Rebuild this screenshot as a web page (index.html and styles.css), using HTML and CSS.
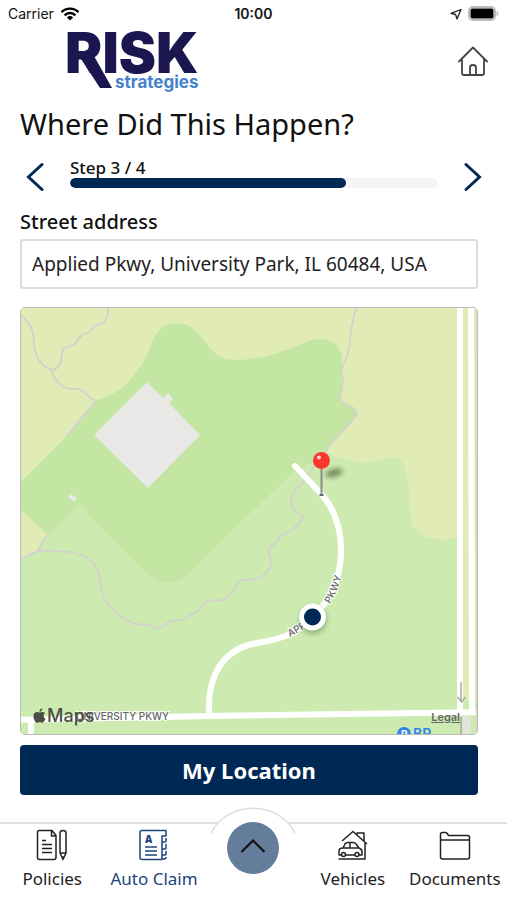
FILE: index.html
```html
<!DOCTYPE html>
<html lang="en">
<head>
    <meta charset="UTF-8">
    <meta name="viewport" content="width=device-width, initial-scale=1">
    <title>Auto Claim - Where Did This Happen?</title>
    <link rel="stylesheet" href="styles.css">
</head>
<body>
<div class="status-bar">
    <div class="status-left">
        <span>Carrier</span>
        <svg width="20" height="14" viewBox="0 0 20 14" fill="none" stroke="#000" stroke-width="2.4">
            <path d="M1.5 5.2a12 12 0 0 1 17 0M4.6 8.3a7.6 7.6 0 0 1 10.8 0"/>
            <path d="M10 13.4 6.9 10.4a4.4 4.4 0 0 1 6.2 0z" fill="#000" stroke="none"/>
        </svg>
    </div>
    <span class="status-time">10:00</span>
    <div class="status-right">
        <svg width="12" height="12" viewBox="0 0 12 12" fill="none" stroke="#222" stroke-width="1.3" stroke-linejoin="round">
            <path d="M11 1.5 1 5.3 5.6 6.5 7 11z"/>
        </svg>
        <svg width="31" height="15" viewBox="0 0 31 15">
            <rect x="1" y="1" width="26" height="13" rx="4" fill="#fff" stroke="#bbb" stroke-width="2"/>
            <rect x="2.5" y="2.5" width="23" height="10" rx="2" fill="#000"/>
            <path d="M28.5 5v5c2.5-1 2.5-4 0-5z" fill="#bbb"/>
        </svg>
    </div>
</div>

<header class="header">
    <svg class="logo" width="136" height="64" viewBox="0 0 136 64" role="img" aria-label="Risk Strategies">
        <path d="M14 26h15l18 32H35z" fill="#1b1650"/>
        <text class="logo-risk" x="0" y="43">RISK</text>
        <text class="logo-strategies" x="50" y="58">strategies</text>
    </svg>
    <a class="home-link" href="#" aria-label="Home">
        <svg width="30" height="31" viewBox="0 0 30 31" fill="none" stroke="#444" stroke-width="1.8" stroke-linejoin="round" stroke-linecap="round">
            <path d="M1 15.5 15 1.5l14 14M4 13.5V27q0 2 2 2h18q2 0 2-2V13.5"/>
            <path d="M12 29V21.5q0-2.5 3-2.5t3 2.5V29"/>
        </svg>
    </a>
</header>

<main class="content">
    <h1>Where Did This Happen?</h1>

    <div class="stepper">
        <button type="button" class="step-btn" aria-label="Previous step">
            <svg width="18" height="30" viewBox="0 0 18 30"><path d="M16 2.5 2.5 15 16 27.5"/></svg>
        </button>
        <div class="step-info">
            <label for="progress">Step 3 / 4</label>
            <progress id="progress" value="3" max="4"></progress>
        </div>
        <button type="button" class="step-btn" aria-label="Next step">
            <svg width="18" height="30" viewBox="0 0 18 30"><path d="M2 2.5 15.5 15 2 27.5"/></svg>
        </button>
    </div>

    <label class="address-label" for="address">Street address</label>
    <input type="text" id="address" name="address" value="Applied Pkwy, University Park, IL 60484, USA">

    <div class="map">
        <svg class="map-canvas" viewBox="21 308 456 426" preserveAspectRatio="xMidYMid slice">
            <defs>
                <filter id="soft" x="-50%" y="-50%" width="200%" height="200%"><feGaussianBlur stdDeviation="2.5"/></filter>
                <path id="road-north" d="M330 604Q338 592 344 568"/>
                <path id="road-south" d="M290 637Q300 632 316 621"/>
            </defs>
            <rect x="0" y="290" width="520" height="470" fill="#cdebb0"/>
            <!-- fields -->
            <path fill="#e0ebb6" d="M0 290H520V700H458V538C435 542 415 538 411 520C409 500 409 480 404 465C398 455 386 458 375 461C358 464 345 459 328 454L200 500H0z"/>
            <path fill="#e0ebb6" d="M0 500H22L48 535 37 551 21 559H0z"/>
            <!-- park -->
            <path fill="#c3e6a3" d="M0 503 22 481 66 437 96 400C122 395 143 370 152 342C160 324 171 322 180 324C192 322 203 340 212 350C221 361 234 361 250 359C275 357 296 345 312 340C332 336 340 345 342 358L341 370 343 380 340 400 355 408 357 414 328 448C318 462 302 468 290 475L195 567C178 588 160 586 143 570L79 504 48 535 21 510z"/>
            <path fill="#cdebb0" d="M327 451C335 458 342 460 350 461L345 520 255 520 240 522z"/>
            <!-- buildings -->
            <path fill="#e8e8e7" d="M147 382 163 398 168 393 173 399 169 403 200 435 148 488 94 435z"/>
            <path fill="#e8e8e7" d="M71 494 77 499 74 502 68 497z"/>
            <!-- trails -->
            <g class="trail">
                <path d="M18 313C31 323 34 329 34 345C36 361 44 367 51 370C55 381 62 388 71 389C84 387 85 396 96 401L66 437"/>
                <path d="M108 305C109 322 103 324 97 325C91 328 92 333 84 334C76 338 78 347 66 347C59 349 64 363 58 367Q55 370 51 370"/>
                <path d="M357 305C353 319 351 326 350 338C350 352 345 361 341 370C345 382 341 389 340 399C343 407 353 406 357 413C357 418 346 426 341 433Q331 442 326 451L313 467C305 486 291 488 291 501C292 512 299 513 303 517C299 526 289 533 283 534C277 540 277 544 269 548C267 556 276 563 269 569C262 579 255 580 242 580C234 584 235 595 223 600C210 600 207 601 203 605C198 613 194 613 190 615C185 621 178 620 171 621C163 625 163 629 155 628C147 623 142 625 135 624C123 620 107 607 103 596C99 580 100 570 94 564C84 552 65 550 38 551L18 560"/>
                <path d="M38 551 42 542 47 535"/>
            </g>
            <!-- roads -->
            <g class="road">
                <path d="M10 720 209 716 490 712"/>
                <path d="M31 720V750"/>
                <path d="M460 290V712M471 290 472 712"/>
                <path stroke-linecap="round" d="M295 466 323 496C336 512 342 530 341 555C339 587 325 606 312 617C292 639 271 640 252 644C224 651 207 674 209 714"/>
            </g>
            <path d="M476.5 290V750" stroke="#d9d9bd" stroke-width="1.5"/>
            <path d="M463 716h8v30h-8z" fill="#e4e4dc"/>
            <path d="M461 682v19M457.5 697l4 5 4-5M461 717v20" fill="none" stroke="#aaa" stroke-width="1.5"/>
            <!-- road names -->
            <text class="road-name" x="76" y="720">UNIVERSITY PKWY</text>
            <text class="road-name"><textPath href="#road-north">PKWY</textPath></text>
            <text class="road-name"><textPath href="#road-south">APPL</textPath></text>
            <circle cx="404" cy="734" r="7" fill="#2f83ed"/>
            <text x="401" y="738" class="poi-icon">P</text>
            <text x="413" y="739" class="poi">BP</text>
            <!-- current location -->
            <circle cx="313" cy="620" r="14" fill="#577345" opacity=".45" filter="url(#soft)"/>
            <circle cx="312.5" cy="617" r="13.5" fill="#fff"/>
            <circle cx="312.5" cy="617" r="8.5" fill="#002855"/>
            <!-- pin -->
            <ellipse cx="334" cy="473" rx="9" ry="4" fill="#475538" opacity=".65" filter="url(#soft)" transform="rotate(-15 334 473)"/>
            <path d="M321.5 467v27" stroke="#8b8b8b" stroke-width="2"/>
            <path d="M319.5 495h4" stroke="#667" stroke-width="2"/>
            <circle cx="321.5" cy="460.5" r="8.5" fill="#fb382d"/>
            <circle cx="319" cy="457.5" r="2" fill="#ffd4d0"/>
        </svg>
        <div class="map-credit">
            <svg width="13" height="16" viewBox="0 0 13 16" fill="#4a4f45">
                <path d="M6.5 4.6C5.5 4.3 4.8 3.9 3.7 4C1.5 4.2.4 6.2.5 8.5c.1 3 2 6.3 3.7 6.3 1 0 1.3-.6 2.5-.6s1.5.6 2.5.6c1.5 0 2.8-2.5 3.3-4C10.4 9.7 10 6.3 12 5.2 10.8 3.7 8.8 3.8 6.5 4.6zM6.5 3.9C6.3 2 7.7.5 9.3.2 9.5 2 8.1 3.8 6.5 3.9z"/>
            </svg>
            <span>Maps</span>
        </div>
        <a class="map-legal" href="#">Legal</a>
    </div>

    <button type="button" class="location-btn">My Location</button>
</main>

<nav class="tab-bar">
    <a class="tab" href="#">
        <svg width="32" height="32" viewBox="0 0 32 32">
            <path d="M16 1.5H3.5q-2 0-2 2v25q0 2 2 2H18q2 0 2-2V6.5zM15.5 1.5V7H20M6 11.5h4M6 15.5h10M6 19.5h10M6 23.5h10"/>
            <path d="M24 24V4q0-2.5 3-2.5T30 4V24l-3 6.5zM24 24h6M26.5 28h1"/>
        </svg>
        Policies
    </a>
    <a class="tab active" href="#">
        <svg width="32" height="32" viewBox="0 0 32 32">
            <path d="M28 7V1.5H4q-2 0-2 2v25q0 2 2 2h20V7zM28 7h-4M28 9v3q0 1-1 1h-3M28 15v4q0 1-1 1h-3M28 22v3q0 1-1 1h-3M28 28q0 2-2 2h-2M7 18h12M7 22h12M7 26h12"/>
            <text class="tab-letter" x="7" y="14">A</text>
        </svg>
        Auto Claim
    </a>
    <div class="tab-center">
        <svg class="center-arc" width="96" height="34" viewBox="0 0 96 34">
            <path d="M6 26C23-7 73-7 90 26V34H6z" fill="#fff"/>
            <path d="M6 26C23-7 73-7 90 26" fill="none" stroke="#ddd" stroke-width="1.5"/>
        </svg>
        <button type="button" class="center-btn" aria-label="Open menu">
            <svg width="26" height="16" viewBox="0 0 26 16"><path d="M1.5 14 13 2.5 24.5 14" fill="none" stroke="#111" stroke-width="2.2"/></svg>
        </button>
    </div>
    <a class="tab" href="#">
        <svg width="32" height="32" viewBox="0 0 32 32">
            <path d="M5 12 16 2.5 30 15M20 5.5V4h7v8M28 14v16H1.5"/>
            <path d="M4.5 26H2V22q0-3 4-3h16q3 1 3 4v3h-3M9 26h9M6 19l2-4q1-1.5 3-1.5h5q2 0 3 1.5l3 4M13 13.5V19"/>
            <circle cx="6.5" cy="25.5" r="2"/><circle cx="20" cy="25.5" r="2"/>
        </svg>
        Vehicles
    </a>
    <a class="tab" href="#">
        <svg width="32" height="32" viewBox="0 0 32 32">
            <path d="M1.5 28V5.5q0-2 2-2h3q1.5 0 2 1.500l1 1.500H28.500q2 0 2 2V28q0 2-2 2h-25q-2 0-2-2zM1.500 11h29"/>
        </svg>
        Documents
    </a>
</nav>
</body>
</html>
```

FILE: styles.css
```css
* {
    box-sizing: border-box;
}

body {
    display: flex;
    flex-direction: column;
    min-height: 100vh;
    margin: 0;
    background-color: #fff;
    color: #111;
    font-family: "Noto Sans", "Open Sans", sans-serif;
}

svg {
    display: block;
}

button {
    font-family: inherit;
    cursor: pointer;
}

/* Status bar */
.status-bar {
    display: grid;
    grid-template-columns: 1fr auto 1fr;
    align-items: center;
    height: 27px;
    padding: 0 8px;
    font-family: Inter, Roboto, sans-serif;
    font-size: 14px;
}

.status-left,
.status-right {
    display: flex;
    align-items: center;
    gap: 6px;
}

.status-right {
    justify-content: flex-end;
}

.status-time {
    font-weight: 600;
}

/* Header */
.header {
    display: flex;
    justify-content: space-between;
    align-items: center;
    height: 73px;
    padding: 0 19px 4px 65px;
}

.logo {
    overflow: visible;
}

.logo-risk {
    font: 900 56px Inter, sans-serif;
    fill: #1b1650;
}

.logo-strategies {
    font: 700 17px Inter, sans-serif;
    fill: #4682cb;
}

/* Form */
.content {
    flex: 1;
    display: flex;
    flex-direction: column;
    padding: 4px 29px 27px 20px;
}

h1 {
    margin: 0;
    font-size: 29px;
    font-weight: 400;
    line-height: 40px;
}

.stepper {
    display: flex;
    align-items: center;
    gap: 26px;
    margin: 10px -4px 16px 6px;
}

.step-btn {
    padding: 8px 0 0;
    border: none;
    background: none;
}

.step-btn path {
    fill: none;
    stroke: #002855;
    stroke-width: 3;
    stroke-linecap: round;
}

.step-info {
    flex: 1;
}

.step-info label {
    display: block;
    font-size: 17px;
    font-weight: 500;
    line-height: 20px;
}

progress {
    display: block;
    width: 100%;
    height: 10px;
    border: none;
    border-radius: 5px;
    background-color: #f5f5f5;
    overflow: hidden;
    appearance: none;
}

progress::-webkit-progress-bar {
    background-color: #f5f5f5;
}

progress::-webkit-progress-value {
    border-radius: 5px;
    background-color: #002855;
}

.address-label {
    margin-bottom: 3px;
    font-size: 20px;
    font-weight: 500;
    line-height: 28px;
}

input[type="text"] {
    width: 100%;
    height: 50px;
    padding: 0 10px;
    border: 2px solid #dcdcdc;
    border-radius: 3px;
    color: #222;
    font-family: inherit;
    font-size: 19px;
}

/* Map */
.map {
    position: relative;
    flex: 1;
    min-height: 240px;
    margin: 18px 0 10px;
    border: 1px solid #bbb;
    border-radius: 5px;
    overflow: hidden;
}

.map-canvas {
    position: absolute;
    width: 100%;
    height: 100%;
}

.trail path {
    fill: none;
    stroke: #d3d3cb;
    stroke-width: 2;
}

.road path {
    fill: none;
    stroke: #fff;
    stroke-width: 6;
}

.road-name {
    font: 500 10px Inter, sans-serif;
    fill: #666;
    stroke: #fff;
    stroke-width: 2;
    paint-order: stroke;
}

.poi {
    font: 600 14px Inter, sans-serif;
    fill: #2f83ed;
}

.poi-icon {
    font: 700 10px Inter, sans-serif;
    fill: #fff;
}

.map-credit {
    position: absolute;
    left: 12px;
    bottom: 8px;
    display: flex;
    align-items: center;
    gap: 1px;
    color: #4a4f45;
    font: 500 18px/20px Inter, sans-serif;
}

.map-legal {
    position: absolute;
    right: 17px;
    bottom: 9px;
    color: #666;
    font: 600 11px/16px Inter, sans-serif;
}

.location-btn {
    width: 100%;
    height: 50px;
    border: none;
    border-radius: 4px;
    background-color: #002855;
    color: #fff;
    font-size: 22px;
    font-weight: 700;
}

/* Bottom tabs */
.tab-bar {
    display: grid;
    grid-template-columns: 21fr 20fr 20fr 20fr 21fr;
    height: 78px;
    border-top: 2px solid #e0e0e0;
}

.tab {
    display: flex;
    flex-direction: column;
    align-items: center;
    gap: 6px;
    padding-top: 5px;
    color: #222;
    font-size: 17px;
    line-height: 24px;
    text-decoration: none;
    white-space: nowrap;
}

.tab path,
.tab circle {
    fill: none;
    stroke: currentColor;
    stroke-width: 1.5;
    stroke-linejoin: round;
}

.tab.active {
    color: #1d457c;
}

.tab-letter {
    font: 900 10px "Noto Sans", sans-serif;
    fill: currentColor;
}

.tab-center {
    position: relative;
    display: flex;
    justify-content: center;
    align-items: flex-start;
}

.center-arc {
    position: absolute;
    top: -17px;
}

.center-btn {
    position: absolute;
    top: -2px;
    display: flex;
    justify-content: center;
    align-items: center;
    width: 52px;
    height: 52px;
    padding: 0 0 4px;
    border: none;
    border-radius: 50%;
    background-color: #647d9b;
}
```
